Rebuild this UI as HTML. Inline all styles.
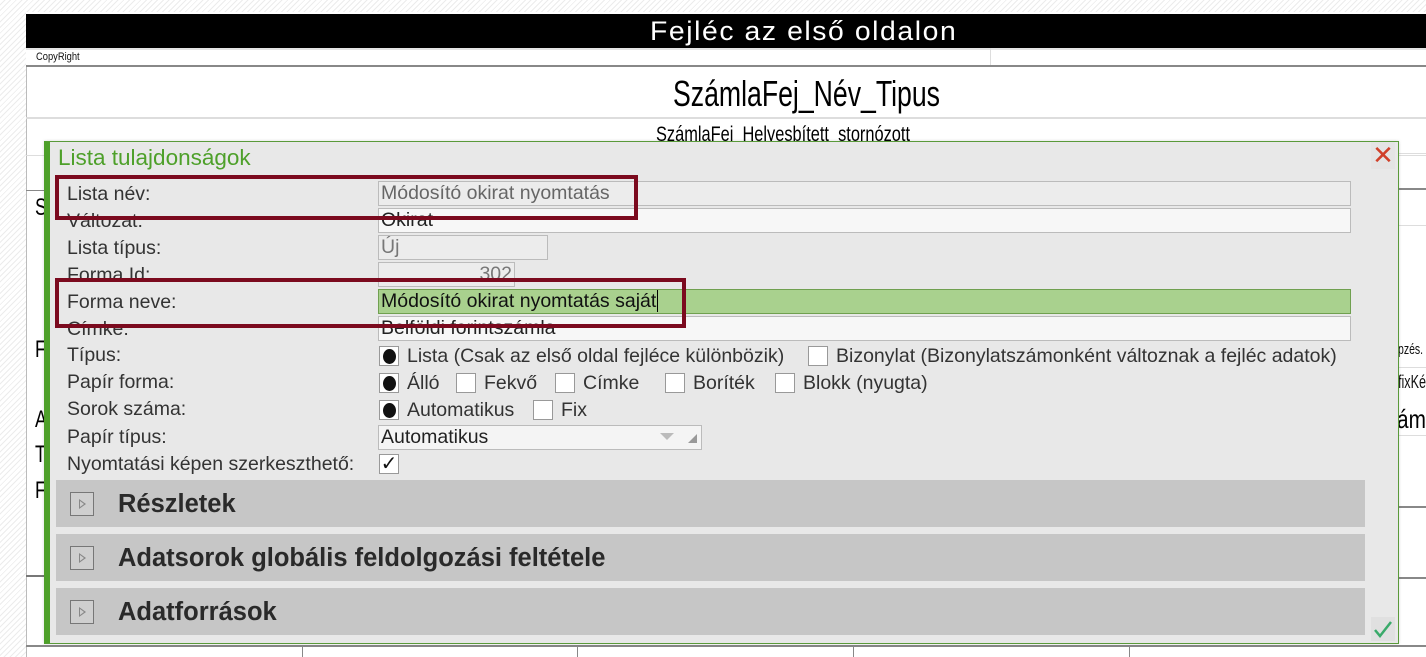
<!DOCTYPE html>
<html><head><meta charset="utf-8"><style>
*{margin:0;padding:0;box-sizing:border-box}
body{width:1426px;height:657px;overflow:hidden;position:relative;font-family:"Liberation Sans",sans-serif;
background:repeating-linear-gradient(135deg,#fff 0 3px,#ececec 3px 4px)}
.a{position:absolute}
.rep{left:26px;top:12px;width:1400px;height:645px;background:#fff}
.lbl{position:absolute;left:67px;font-size:19.5px;color:#333;line-height:22px;white-space:nowrap}
.inp{position:absolute;height:25px;border:1px solid #bbb;background:#f7f7f7;font-size:19.5px;color:#222;line-height:23px;padding-left:2px;overflow:hidden;white-space:nowrap}
.rb{position:absolute;border:4px solid #7b0a1e}
.sec{position:absolute;left:56px;width:1309px;height:47px;background:#c6c6c6;font-weight:bold;font-size:25.5px;color:#2a2a2a}
.sec .tb{position:absolute;left:14px;top:12px;width:24px;height:24px;border:1px solid #777;background:#cfcfcf}
.sec .tb:after{content:"";position:absolute;left:8px;top:6px;border-left:7px solid #888;border-top:5px solid transparent;border-bottom:5px solid transparent}
.sec .tb:before{content:"";position:absolute;left:9px;top:8px;border-left:4px solid #cfcfcf;border-top:3px solid transparent;border-bottom:3px solid transparent;z-index:1}
.sec span{position:absolute;left:62px;top:10px}
.cb{position:absolute;width:20px;height:20px;border:1px solid #999;background:#fff}
.cb.on:after{content:"";position:absolute;left:3px;top:2px;width:13px;height:15px;border-radius:50%;background:#111}
.opt{position:absolute;font-size:19.5px;color:#333;line-height:22px;white-space:nowrap}
.sq{display:inline-block;transform-origin:left center}
</style></head><body>
<div class="a rep"></div>
<div class="a" style="left:26px;top:14px;width:1400px;height:34px;background:#000"></div>
<div class="a" style="left:650px;top:14px;color:#fff;font-size:27px;line-height:34px;white-space:nowrap"><span class="sq" style="transform:scaleX(1.05);letter-spacing:1.5px">Fejléc az első oldalon</span></div>
<div class="a" style="left:26px;top:48px;width:1400px;height:2px;background:#e4e4e4"></div>
<div class="a" style="left:36px;top:51px;font-size:11px;color:#111"><span class="sq" style="transform:scaleX(.85)">CopyRight</span></div>
<div class="a" style="left:990px;top:48px;width:1px;height:17px;background:#ddd"></div>
<div class="a" style="left:26px;top:65px;width:1400px;height:2px;background:#888"></div>
<div class="a" style="left:26px;top:67px;width:1px;height:590px;background:#bbb"></div>
<div class="a" style="left:673px;top:72px;font-size:36px;color:#000;line-height:44px;white-space:nowrap"><span class="sq" style="transform:scaleX(.74)">SzámlaFej_Név_Tipus</span></div>
<div class="a" style="left:26px;top:117px;width:1400px;height:2px;background:#ddd"></div>
<div class="a" style="left:656px;top:123px;font-size:21px;color:#000;white-space:nowrap"><span class="sq" style="transform:scaleX(.78)">SzámlaFej_Helyesbített_stornózott</span></div>
<div class="a" style="left:26px;top:155px;width:1400px;height:1px;background:#ddd"></div>
<div class="a" style="left:1398px;top:153px;width:28px;height:1px;background:#ddd"></div>
<div class="a" style="left:1398px;top:188px;width:28px;height:2px;background:#888"></div>
<div class="a" style="left:26px;top:190px;width:30px;height:1px;background:#888"></div>
<div class="a" style="left:1398px;top:225px;width:28px;height:1px;background:#ddd"></div>
<div class="a" style="left:35px;top:194px;font-size:24px"><span class="sq" style="transform:scaleX(.75)">S</span></div>
<div class="a" style="left:35px;top:336px;font-size:24px"><span class="sq" style="transform:scaleX(.75)">F</span></div>
<div class="a" style="left:35px;top:406px;font-size:24px"><span class="sq" style="transform:scaleX(.75)">A</span></div>
<div class="a" style="left:35px;top:441px;font-size:24px"><span class="sq" style="transform:scaleX(.75)">T</span></div>
<div class="a" style="left:35px;top:477px;font-size:24px"><span class="sq" style="transform:scaleX(.75)">F</span></div>
<div class="a" style="left:26px;top:575px;width:20px;height:2px;background:#777"></div>
<div class="a" style="left:1398px;top:341px;font-size:15px;color:#111;white-space:nowrap"><span class="sq" style="transform:scaleX(.7)">pzés.</span></div>
<div class="a" style="left:1398px;top:372px;font-size:18px;color:#111;white-space:nowrap"><span class="sq" style="transform:scaleX(.7)">fixKép</span></div>
<div class="a" style="left:1397px;top:404px;font-size:26px;color:#000;white-space:nowrap"><span class="sq" style="transform:scaleX(.8)">ám</span></div>
<div class="a" style="left:1398px;top:367px;width:28px;height:1px;background:#ddd"></div>
<div class="a" style="left:1398px;top:435px;width:28px;height:1px;background:#ddd"></div>
<div class="a" style="left:1398px;top:506px;width:28px;height:2px;background:#888"></div>
<div class="a" style="left:1398px;top:577px;width:28px;height:2px;background:#888"></div>
<div class="a" style="left:26px;top:645px;width:1400px;height:2px;background:#888"></div>
<div class="a" style="left:302px;top:645px;width:1px;height:12px;background:#888"></div>
<div class="a" style="left:577px;top:645px;width:1px;height:12px;background:#888"></div>
<div class="a" style="left:853px;top:645px;width:1px;height:12px;background:#888"></div>
<div class="a" style="left:1129px;top:645px;width:1px;height:12px;background:#888"></div>

<!-- dialog -->
<div class="a" style="left:44px;top:141px;width:1355px;height:503px;background:#e8e8e8;border:1px solid #5a9a3a;border-left:6px solid #4ea02a;box-shadow:0 0 3px rgba(0,0,0,.15)"></div>
<div class="a" style="left:58px;top:145px;font-size:22.5px;color:#4ea02a;white-space:nowrap">Lista tulajdonságok</div>
<div class="a" style="left:1371px;top:142px;width:24px;height:27px;background:#e4e4e4;color:#d0402a;font-size:26px;line-height:27px;text-align:center">✕</div>

<div class="lbl" style="top:183px">Lista név:</div>
<div class="lbl" style="top:210px">Változat:</div>
<div class="lbl" style="top:237px">Lista típus:</div>
<div class="lbl" style="top:264px">Forma Id:</div>
<div class="lbl" style="top:291px">Forma neve:</div>
<div class="lbl" style="top:318px">Címke:</div>
<div class="lbl" style="top:344px">Típus:</div>
<div class="lbl" style="top:371px">Papír forma:</div>
<div class="lbl" style="top:398px">Sorok száma:</div>
<div class="lbl" style="top:426px">Papír típus:</div>
<div class="lbl" style="top:453px">Nyomtatási képen szerkeszthető:</div>

<div class="inp" style="left:378px;top:181px;width:973px;background:#ececec;color:#666">Módosító okirat nyomtatás</div>
<div class="inp" style="left:378px;top:208px;width:973px">Okirat</div>
<div class="inp" style="left:378px;top:235px;width:170px;background:#ececec;color:#777">Új</div>
<div class="inp" style="left:378px;top:262px;width:137px;background:#ececec;color:#777;text-align:right;padding-right:2px">302</div>
<div class="inp" style="left:378px;top:289px;width:973px;background:#a9d18e;border-color:#70a050;color:#111">Módosító okirat nyomtatás saját<span style="border-left:1px solid #000;margin-left:1px"></span></div>
<div class="inp" style="left:378px;top:316px;width:973px">Belföldi forintszámla</div>

<div class="rb" style="left:55px;top:175px;width:583px;height:45px"></div>
<div class="rb" style="left:55px;top:278px;width:631px;height:50px"></div>

<div class="cb on" style="left:379px;top:346px"></div><div class="opt" style="left:407px;top:345px">Lista (Csak az első oldal fejléce különbözik)</div>
<div class="cb" style="left:808px;top:346px"></div><div class="opt" style="left:836px;top:345px">Bizonylat (Bizonylatszámonként változnak a fejléc adatok)</div>
<div class="cb on" style="left:379px;top:373px"></div><div class="opt" style="left:407px;top:372px">Álló</div>
<div class="cb" style="left:456px;top:373px"></div><div class="opt" style="left:484px;top:372px">Fekvő</div>
<div class="cb" style="left:555px;top:373px"></div><div class="opt" style="left:583px;top:372px">Címke</div>
<div class="cb" style="left:665px;top:373px"></div><div class="opt" style="left:693px;top:372px">Boríték</div>
<div class="cb" style="left:775px;top:373px"></div><div class="opt" style="left:803px;top:372px">Blokk (nyugta)</div>
<div class="cb on" style="left:379px;top:400px"></div><div class="opt" style="left:407px;top:399px">Automatikus</div>
<div class="cb" style="left:533px;top:400px"></div><div class="opt" style="left:561px;top:399px">Fix</div>
<div class="inp" style="left:378px;top:425px;width:324px;background:#f4f4f4;color:#222">Automatikus</div>
<div class="a" style="left:660px;top:433px;border-top:7px solid #bbb;border-left:7px solid transparent;border-right:7px solid transparent"></div>
<div class="a" style="left:688px;top:434px;border-bottom:9px solid #999;border-left:9px solid transparent"></div>
<div class="cb" style="left:379px;top:454px;font-size:20px;line-height:18px;text-align:center;color:#111">✓</div>

<div class="sec" style="top:480px"><div class="tb"></div><span>Részletek</span></div>
<div class="sec" style="top:534px"><div class="tb"></div><span>Adatsorok globális feldolgozási feltétele</span></div>
<div class="sec" style="top:588px"><div class="tb"></div><span>Adatforrások</span></div>
<div class="a" style="left:1371px;top:617px;width:24px;height:24px;background:#e0e0e0"></div>
<svg class="a" style="left:1372px;top:619px" width="22" height="20"><path d="M3 11 L8 17 L19 3" stroke="#3aaa6a" stroke-width="2.5" fill="none"/></svg>
</body></html>
